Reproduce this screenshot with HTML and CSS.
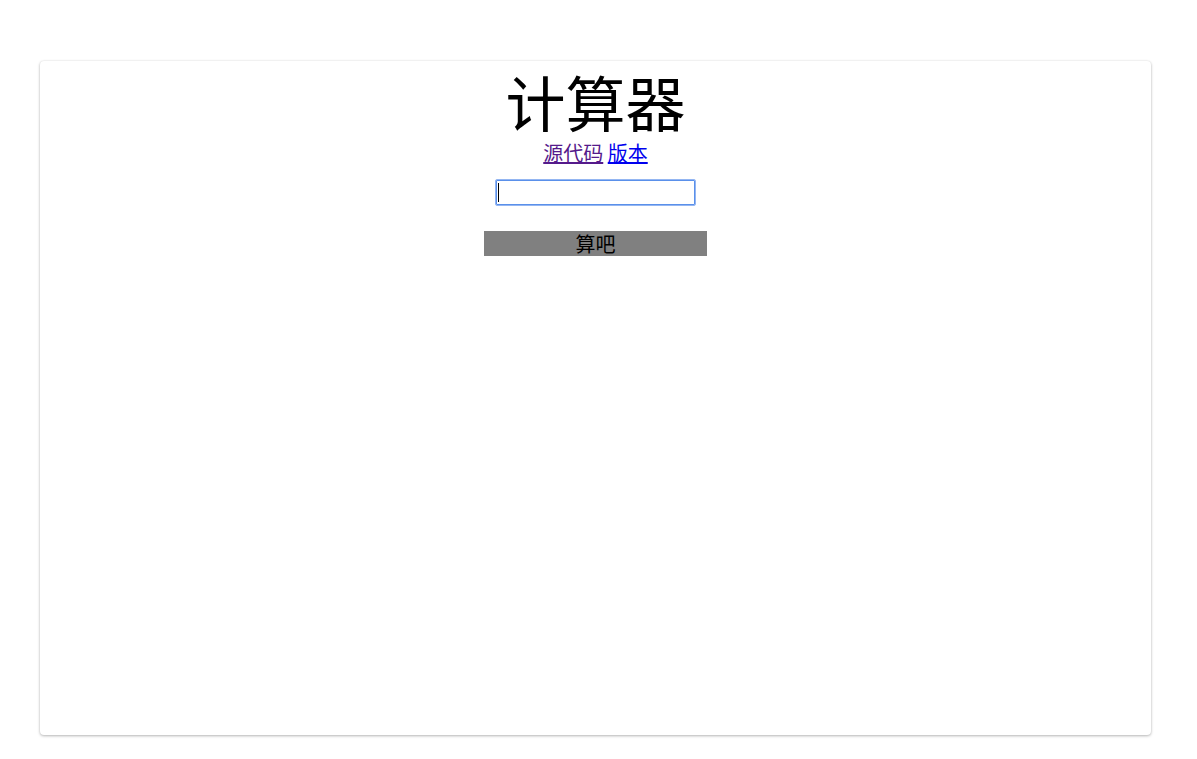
FILE: index.html
```html
<!DOCTYPE html>
<html lang="zh">
<head>
<meta charset="utf-8">
<title>计算器</title>
<link rel="stylesheet" href="styles.css">
</head>
<body>
<main class="card">
  <h1 class="title">计算器</h1>
  <div class="links"><a class="visited" href="#src">源代码</a> <a class="link" href="#ver">版本</a></div>
  <span class="field"><input class="expr" type="text"><span class="caret"></span></span>
  <button class="go" type="button">算吧</button>
</main>
</body>
</html>
```

FILE: styles.css
```css
html, body {
  margin: 0;
  padding: 0;
  background: #ffffff;
}
body {
  padding-top: 61px;
  padding-bottom: 24px;
  font-family: "Noto Sans CJK SC", "Noto Sans", sans-serif;
}
.card {
  margin-left: 40px;
  width: 1111px;
  height: 674px;
  box-sizing: border-box;
  background: #ffffff;
  border-radius: 4px;
  box-shadow: 0 1px 3px rgba(0,0,0,0.28), 0 0 2px rgba(0,0,0,0.08);
  display: flex;
  flex-direction: column;
  align-items: center;
}
.title {
  margin: 0;
  font-size: 60px;
  font-weight: 400;
  line-height: 80px;
  color: #000;
}
.links {
  margin-top: 1px;
  font-size: 20px;
  line-height: 22px;
}
.links a {
  text-decoration: underline;
}
.visited { color: #551a8b; }
.link { color: #0000ee; }
.field {
  position: relative;
  display: block;
  margin-top: 15px;
  width: 201px;
  height: 27px;
}
input.expr {
  -webkit-appearance: none;
  appearance: none;
  display: block;
  width: 201px;
  height: 27px;
  margin: 0;
  box-sizing: border-box;
  border: 1px solid #94b6f2;
  border-radius: 2px;
  box-shadow: inset 0 0 0 1px #5a90ea;
  outline: none;
  padding: 0 2px;
  font-size: 16px;
  font-family: "Noto Sans CJK SC", sans-serif;
  background: #fff;
}
.caret {
  position: absolute;
  left: 3px;
  top: 4px;
  width: 1px;
  height: 19px;
  background: #000;
}
.go {
  margin-top: 25px;
  width: 223px;
  height: 25px;
  border: none;
  background: #808080;
  color: #000;
  font-size: 20px;
  line-height: 25px;
  padding: 0;
  font-family: "Noto Sans CJK SC", sans-serif;
}
```
